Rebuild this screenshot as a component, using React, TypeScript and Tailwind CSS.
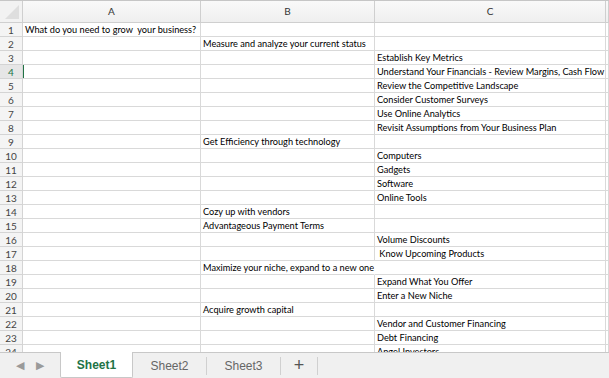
import React from "react";

// row -> [A, B, C]
const ROWS: [string, string, string][] = [
  ["What do you need to grow\u00a0 your business?", "", ""],
  ["", "Measure and analyze your current status", ""],
  ["", "", "Establish Key Metrics"],
  ["", "", "Understand Your Financials - Review Margins, Cash Flow"],
  ["", "", "Review the Competitive Landscape"],
  ["", "", "Consider Customer Surveys"],
  ["", "", "Use Online Analytics"],
  ["", "", "Revisit Assumptions from Your Business Plan"],
  ["", "Get Efficiency through technology", ""],
  ["", "", "Computers"],
  ["", "", "Gadgets"],
  ["", "", "Software"],
  ["", "", "Online Tools"],
  ["", "Cozy up with vendors", ""],
  ["", "Advantageous Payment Terms", ""],
  ["", "", "Volume Discounts"],
  ["", "", "\u00a0Know Upcoming Products"],
  ["", "Maximize your niche, expand to a new one", ""],
  ["", "", "Expand What You Offer"],
  ["", "", "Enter a New Niche"],
  ["", "Acquire growth capital", ""],
  ["", "", "Vendor and Customer Financing"],
  ["", "", "Debt Financing"],
  ["", "", "Angel Investors"],
];

const cellFont = { fontFamily: "Lato, 'Open Sans', sans-serif" };

const Cell = ({ text, overflow, active }: { text: string; overflow?: boolean; active?: boolean }) => (
  <div
    className={`relative h-[14px] border-b border-[#d9d9d9] pl-[2px] pt-px text-[9.2px] leading-[12px] text-black whitespace-nowrap ${
      overflow ? "border-r border-r-transparent overflow-visible z-10" : "border-r border-r-[#d9d9d9] overflow-hidden"
    }`}
  >
    {active && <div className="absolute left-[-1px] top-0 bottom-0 w-[2px] bg-[#217346]" />}
    {text}
  </div>
);

const Tab = ({ label, active }: { label: string; active?: boolean }) =>
  active ? (
    <div className="w-[73px] -mt-px flex items-center justify-center bg-white text-[#217346] font-bold text-[12px] border-x border-b border-[#c8c8c8] rounded-b-[2px]">
      {label}
    </div>
  ) : (
    <div className="w-[74px] flex items-center">
      <div className="flex-1 h-[18px] flex items-center justify-center border-r border-[#d0d0d0] text-[12px] text-[#666]">
        {label}
      </div>
    </div>
  );

export default function App() {
  return (
    <div className="w-[609px] h-[378px] flex flex-col bg-white overflow-hidden" style={{ fontFamily: "'Liberation Sans', Arial, sans-serif" }}>
      <div className="flex-1 overflow-hidden border-t border-[#c6c6c6]">
        <div className="grid grid-cols-[23px_178px_174px_231px_1fr]" style={cellFont}>
          {/* header row */}
          <div className="relative h-[22px] border-r border-b border-[#cfcfcf] bg-[#f2f2f2]">
            <div className="absolute right-[3px] bottom-[3px] w-0 h-0 border-l-[14px] border-l-transparent border-b-[14px] border-b-[#dedede]" />
          </div>
          {["A", "B", "C", ""].map((c, i) => (
            <div
              key={i}
              className="h-[22px] flex items-center justify-center border-r border-b border-[#cfcfcf] bg-gradient-to-b from-[#f9f9f9] to-[#efefef] text-[10px] text-[#333]"
            >
              {c}
            </div>
          ))}
          {ROWS.map((r, i) => (
            <React.Fragment key={i}>
              <div
                className={`h-[14px] flex items-center justify-center pt-px border-r border-b border-[#d4d4d4] text-[10px] ${
                  i === 3 ? "bg-[#e6e6e6] text-[#217346]" : "bg-[#f4f4f4] text-[#444]"
                }`}
              >
                {i + 1}
              </div>
              <Cell text={r[0]} active={i === 3} />
              <Cell text={r[1]} overflow={i === 17} />
              <Cell text={r[2]} />
              <Cell text="" />
            </React.Fragment>
          ))}
        </div>
      </div>
      <div className="h-[26px] shrink-0 flex items-stretch bg-[#f0f0f0] border-t border-[#c8c8c8]">
        <div className="w-[60px] flex items-center justify-center gap-[12px] text-[#9a9a9a] text-[11px]">
          <span>◀</span>
          <span>▶</span>
        </div>
        <Tab label="Sheet1" active />
        <Tab label="Sheet2" />
        <Tab label="Sheet3" />
        <div className="w-[37px] flex items-center">
          <div className="flex-1 h-[18px] flex items-center justify-center border-r border-[#d0d0d0] text-[#555] text-[18px]">
            +
          </div>
        </div>
      </div>
    </div>
  );
}
